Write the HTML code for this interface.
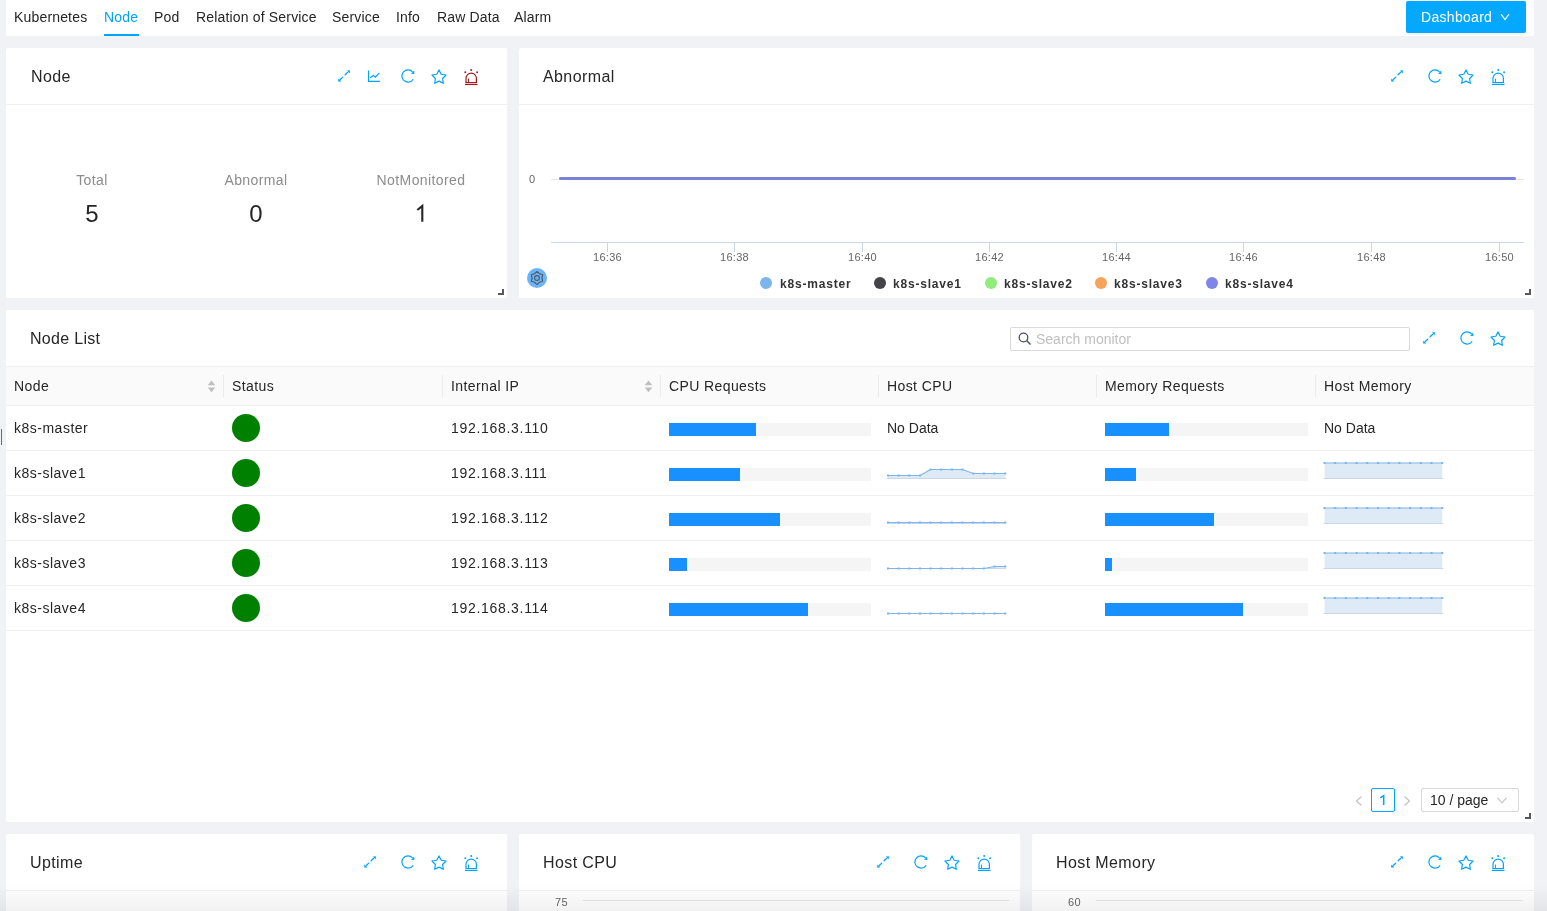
<!DOCTYPE html>
<html><head><meta charset="utf-8">
<style>
*{box-sizing:border-box;margin:0;padding:0}
html,body{width:1547px;height:911px;overflow:hidden}
body{background:#f0f2f5;font-family:"Liberation Sans",sans-serif;color:#262626;position:relative}
.a{position:absolute;white-space:nowrap}
.bg{position:absolute;background:#fff;border-radius:2px}
.pt{position:absolute;font-size:16px;line-height:20px;color:#262626;letter-spacing:0.4px}
.dv{position:absolute;height:1px;background:#f0f0f0}
.tab{position:absolute;top:9px;font-size:14px;line-height:16px;color:#262626;letter-spacing:0.17px}
.th{position:absolute;font-size:14px;line-height:16px;color:#262626;letter-spacing:0.4px}
.sep{position:absolute;top:375px;width:1px;height:22px;background:#ebebeb}
.rb{position:absolute;left:6px;width:1528px;height:1px;background:#f0f0f0}
.cell{position:absolute;font-size:14px;line-height:16px;color:#262626}
.bar{position:absolute;height:13px;background:#f5f5f5}
.bar i{position:absolute;left:0;top:0;bottom:0;background:#1890ff}
.dot{position:absolute;width:28px;height:28px;border-radius:50%;background:#008000}
.hdl{position:absolute;width:6px;height:6px;border-right:2px solid #595959;border-bottom:2px solid #595959}
.ax{position:absolute;font-size:11px;line-height:12px;color:#666;letter-spacing:0.3px}
.lg{position:absolute;font-size:12px;line-height:14px;font-weight:bold;color:#333}
.lc{position:absolute;width:12px;height:12px;border-radius:50%}
</style></head><body><div id="root" style="position:absolute;left:0;top:0;width:1547px;height:911px;will-change:transform">

<div class="bg" style="left:6px;top:0;width:1528px;height:36px;border-radius:0"></div>
<div class="tab" style="left:14px">Kubernetes</div>
<div class="tab" style="left:104px;color:#00a3ff">Node</div>
<div class="tab" style="left:154px">Pod</div>
<div class="tab" style="left:196px">Relation of Service</div>
<div class="tab" style="left:332px">Service</div>
<div class="tab" style="left:396px">Info</div>
<div class="tab" style="left:437px">Raw Data</div>
<div class="tab" style="left:514px">Alarm</div>
<div class="a" style="left:104px;top:34px;width:35px;height:2px;background:#00a3ff"></div>
<div class="a" style="left:1406px;top:1px;width:120px;height:32px;background:#05a8ff;border-radius:2px;box-shadow:0 2px 0 rgba(0,0,0,0.045)"></div>
<div class="a" style="left:1421px;top:9px;font-size:14px;line-height:16px;color:#fff;letter-spacing:0.3px">Dashboard</div>
<svg class="a" style="left:1500px;top:13px" width="10" height="8" viewBox="0 0 10 8"><path d="M1 1.2 L5 6.6 L9 1.2" fill="none" stroke="#fff" stroke-width="1.1"/></svg>
<div class="bg" style="left:6px;top:48px;width:501px;height:250px"></div>
<div class="dv" style="left:6px;top:104px;width:501px"></div>
<div class="pt" style="left:31px;top:67px">Node</div>
<svg class="a" style="left:336px;top:68px;overflow:visible" width="16" height="16" viewBox="0 0 16 16"><path d="M2.1 13.5 L2.4 10.6 L5.4 13.6Z M13.9 2.3 L11.0 2.5 L13.7 5.4Z" fill="#00a3ff"/><path d="M4.3 11.5 L6.8 9.1 M9.1 6.8 L11.7 4.3" stroke="#00a3ff" stroke-width="1.25" stroke-linecap="round" fill="none"/></svg><svg class="a" style="left:366px;top:68px;overflow:visible" width="16" height="16" viewBox="0 0 16 16"><path d="M2.5 2.4 V13.4 H13.9" stroke="#00a3ff" stroke-width="1.15" fill="none"/><path d="M4.5 9.5 L7.3 7.4 L9.4 9.2 L12.9 5.3" stroke="#00a3ff" stroke-width="1.2" stroke-linejoin="round" stroke-linecap="round" fill="none"/></svg><svg class="a" style="left:400.4px;top:68px;overflow:visible" width="16" height="16" viewBox="0 0 16 16"><path d="M12.53 3.92 A6.1 6.1 0 1 0 13.17 11.23" stroke="#00a3ff" stroke-width="1.2" fill="none"/><path d="M11.0 5.7 L14.4 6.0 L14.2 2.6Z" fill="#00a3ff"/></svg><svg class="a" style="left:430px;top:68px;overflow:visible" width="18" height="18" viewBox="0 0 18 18"><polygon points="9.00,1.90 11.23,6.23 16.04,7.01 12.61,10.47 13.35,15.29 9.00,13.10 4.65,15.29 5.39,10.47 1.96,7.01 6.77,6.23" stroke="#00a3ff" stroke-width="1.2" stroke-linejoin="round" fill="none"/></svg><svg class="a" style="left:464px;top:68px;overflow:visible" width="16" height="18" viewBox="0 0 16 18"><path d="M2.0 14.5 V10.3 A5.2 5.2 0 0 1 12.4 10.3 V14.5 Z" stroke="#a31a1e" stroke-width="1.2" fill="none"/><path d="M4.5 13.9 V10.6" stroke="#a31a1e" stroke-width="1.1" fill="none"/><path d="M0.9 16.4 H13.5" stroke="#a31a1e" stroke-width="1.3" fill="none"/><circle cx="7.2" cy="1.9" r="1" fill="#a31a1e"/><circle cx="1.3" cy="4.2" r="0.95" fill="#a31a1e"/><circle cx="13.1" cy="4.2" r="0.95" fill="#a31a1e"/></svg>
<div class="a" style="left:12px;top:172px;width:160px;text-align:center;font-size:14px;line-height:16px;color:#8c8c8c;letter-spacing:0.4px">Total</div>
<div class="a" style="left:12px;top:200px;width:160px;text-align:center;font-size:24px;line-height:28px;color:#262626">5</div>
<div class="a" style="left:176px;top:172px;width:160px;text-align:center;font-size:14px;line-height:16px;color:#8c8c8c;letter-spacing:0.4px">Abnormal</div>
<div class="a" style="left:176px;top:200px;width:160px;text-align:center;font-size:24px;line-height:28px;color:#262626">0</div>
<div class="a" style="left:341px;top:172px;width:160px;text-align:center;font-size:14px;line-height:16px;color:#8c8c8c;letter-spacing:0.4px">NotMonitored</div>
<svg class="a" style="left:410px;top:200px" width="20" height="26" viewBox="410 200 20 26"><path d="M417.3 210.0 L422.3 205.9 V221.8" fill="none" stroke="#262626" stroke-width="2.1" stroke-linejoin="miter"/></svg>
<div class="hdl" style="left:498px;top:289px"></div>
<div class="bg" style="left:519px;top:48px;width:1015px;height:250px"></div>
<div class="dv" style="left:519px;top:104px;width:1015px"></div>
<div class="pt" style="left:543px;top:67px">Abnormal</div>
<svg class="a" style="left:1389px;top:68px;overflow:visible" width="16" height="16" viewBox="0 0 16 16"><path d="M2.1 13.5 L2.4 10.6 L5.4 13.6Z M13.9 2.3 L11.0 2.5 L13.7 5.4Z" fill="#00a3ff"/><path d="M4.3 11.5 L6.8 9.1 M9.1 6.8 L11.7 4.3" stroke="#00a3ff" stroke-width="1.25" stroke-linecap="round" fill="none"/></svg><svg class="a" style="left:1427.4px;top:68px;overflow:visible" width="16" height="16" viewBox="0 0 16 16"><path d="M12.53 3.92 A6.1 6.1 0 1 0 13.17 11.23" stroke="#00a3ff" stroke-width="1.2" fill="none"/><path d="M11.0 5.7 L14.4 6.0 L14.2 2.6Z" fill="#00a3ff"/></svg><svg class="a" style="left:1457px;top:68px;overflow:visible" width="18" height="18" viewBox="0 0 18 18"><polygon points="9.00,1.90 11.23,6.23 16.04,7.01 12.61,10.47 13.35,15.29 9.00,13.10 4.65,15.29 5.39,10.47 1.96,7.01 6.77,6.23" stroke="#00a3ff" stroke-width="1.2" stroke-linejoin="round" fill="none"/></svg><svg class="a" style="left:1491px;top:68px;overflow:visible" width="16" height="18" viewBox="0 0 16 18"><path d="M2.0 14.5 V10.3 A5.2 5.2 0 0 1 12.4 10.3 V14.5 Z" stroke="#00a3ff" stroke-width="1.2" fill="none"/><path d="M4.5 13.9 V10.6" stroke="#00a3ff" stroke-width="1.1" fill="none"/><path d="M0.9 16.4 H13.5" stroke="#00a3ff" stroke-width="1.3" fill="none"/><circle cx="7.2" cy="1.9" r="1" fill="#00a3ff"/><circle cx="1.3" cy="4.2" r="0.95" fill="#00a3ff"/><circle cx="13.1" cy="4.2" r="0.95" fill="#00a3ff"/></svg>
<div class="ax" style="left:529px;top:173px">0</div>
<div class="a" style="left:551px;top:179px;width:973px;height:1px;background:#e6e6e6"></div>
<div class="a" style="left:559px;top:177px;width:957px;height:3px;border-radius:2px;background:#7b80d8"></div>
<div class="a" style="left:551px;top:242px;width:973px;height:1px;background:#ccd6eb"></div>
<div class="a" style="left:607px;top:242px;width:1px;height:10px;background:#ccd6eb"></div>
<div class="ax" style="left:577px;top:251px;width:61px;text-align:center">16:36</div>
<div class="a" style="left:734px;top:242px;width:1px;height:10px;background:#ccd6eb"></div>
<div class="ax" style="left:704px;top:251px;width:61px;text-align:center">16:38</div>
<div class="a" style="left:862px;top:242px;width:1px;height:10px;background:#ccd6eb"></div>
<div class="ax" style="left:832px;top:251px;width:61px;text-align:center">16:40</div>
<div class="a" style="left:989px;top:242px;width:1px;height:10px;background:#ccd6eb"></div>
<div class="ax" style="left:959px;top:251px;width:61px;text-align:center">16:42</div>
<div class="a" style="left:1116px;top:242px;width:1px;height:10px;background:#ccd6eb"></div>
<div class="ax" style="left:1086px;top:251px;width:61px;text-align:center">16:44</div>
<div class="a" style="left:1243px;top:242px;width:1px;height:10px;background:#ccd6eb"></div>
<div class="ax" style="left:1213px;top:251px;width:61px;text-align:center">16:46</div>
<div class="a" style="left:1371px;top:242px;width:1px;height:10px;background:#ccd6eb"></div>
<div class="ax" style="left:1341px;top:251px;width:61px;text-align:center">16:48</div>
<div class="a" style="left:1499px;top:242px;width:1px;height:10px;background:#ccd6eb"></div>
<div class="ax" style="left:1469px;top:251px;width:61px;text-align:center">16:50</div>
<div class="lc" style="left:760px;top:277px;background:#7cb5ec"></div>
<div class="lg" style="left:780px;top:277px;letter-spacing:0.8px">k8s-master</div>
<div class="lc" style="left:874px;top:277px;background:#434348"></div>
<div class="lg" style="left:893px;top:277px;letter-spacing:0.8px">k8s-slave1</div>
<div class="lc" style="left:985px;top:277px;background:#90ed7d"></div>
<div class="lg" style="left:1004px;top:277px;letter-spacing:0.8px">k8s-slave2</div>
<div class="lc" style="left:1095px;top:277px;background:#f7a35c"></div>
<div class="lg" style="left:1114px;top:277px;letter-spacing:0.8px">k8s-slave3</div>
<div class="lc" style="left:1206px;top:277px;background:#8085e9"></div>
<div class="lg" style="left:1225px;top:277px;letter-spacing:0.8px">k8s-slave4</div>
<div class="a" style="left:527px;top:268px;width:20px;height:20px;border-radius:50%;background:#6cb4f8"></div>
<svg class="a" style="left:530px;top:271px" width="14" height="14" viewBox="0 0 14 14"><polygon points="7.00,0.40 9.45,2.76 12.72,3.70 11.90,7.00 12.72,10.30 9.45,11.24 7.00,13.60 4.55,11.24 1.28,10.30 2.10,7.00 1.28,3.70 4.55,2.76" fill="none" stroke="#505a66" stroke-width="1.1" stroke-linejoin="round"/><circle cx="7" cy="7" r="2.4" fill="none" stroke="#505a66" stroke-width="1.1"/></svg>
<div class="hdl" style="left:1525px;top:289px"></div>
<div class="bg" style="left:6px;top:310px;width:1528px;height:512px"></div>
<div class="pt" style="left:30px;top:329px;letter-spacing:0.3px">Node List</div>
<div class="a" style="left:1010px;top:327px;width:400px;height:24px;border:1px solid #d9d9d9;border-radius:2px;background:#fff"></div>
<svg class="a" style="left:1018px;top:332px" width="14" height="14" viewBox="0 0 14 14"><circle cx="5.5" cy="5.5" r="4.3" fill="none" stroke="#4a5060" stroke-width="1.3"/><path d="M8.6 8.6 L12.5 12.5" stroke="#4a5060" stroke-width="1.4"/></svg>
<div class="a" style="left:1036px;top:331px;font-size:14px;line-height:16px;color:#bfbfbf">Search monitor</div>
<svg class="a" style="left:1421px;top:330px;overflow:visible" width="16" height="16" viewBox="0 0 16 16"><path d="M2.1 13.5 L2.4 10.6 L5.4 13.6Z M13.9 2.3 L11.0 2.5 L13.7 5.4Z" fill="#00a3ff"/><path d="M4.3 11.5 L6.8 9.1 M9.1 6.8 L11.7 4.3" stroke="#00a3ff" stroke-width="1.25" stroke-linecap="round" fill="none"/></svg>
<svg class="a" style="left:1459.4px;top:330px;overflow:visible" width="16" height="16" viewBox="0 0 16 16"><path d="M12.53 3.92 A6.1 6.1 0 1 0 13.17 11.23" stroke="#00a3ff" stroke-width="1.2" fill="none"/><path d="M11.0 5.7 L14.4 6.0 L14.2 2.6Z" fill="#00a3ff"/></svg>
<svg class="a" style="left:1489px;top:330px;overflow:visible" width="18" height="18" viewBox="0 0 18 18"><polygon points="9.00,1.90 11.23,6.23 16.04,7.01 12.61,10.47 13.35,15.29 9.00,13.10 4.65,15.29 5.39,10.47 1.96,7.01 6.77,6.23" stroke="#00a3ff" stroke-width="1.2" stroke-linejoin="round" fill="none"/></svg>
<div class="a" style="left:6px;top:366px;width:1528px;height:40px;background:#fafafa"></div>
<div class="rb" style="top:366px"></div>
<div class="rb" style="top:405px"></div>
<div class="th" style="left:14px;top:378px">Node</div>
<div class="th" style="left:232px;top:378px">Status</div>
<div class="th" style="left:451px;top:378px">Internal IP</div>
<div class="th" style="left:669px;top:378px">CPU Requests</div>
<div class="th" style="left:887px;top:378px">Host CPU</div>
<div class="th" style="left:1105px;top:378px">Memory Requests</div>
<div class="th" style="left:1324px;top:378px">Host Memory</div>
<div class="sep" style="left:223px"></div>
<div class="sep" style="left:442px"></div>
<div class="sep" style="left:660px"></div>
<div class="sep" style="left:878px"></div>
<div class="sep" style="left:1096px"></div>
<div class="sep" style="left:1315px"></div>
<svg class="a" style="left:206.5px;top:379.5px" width="9" height="13" viewBox="0 0 9 13"><path d="M4.5 0.4 L8.3 5.3 H0.7z M4.5 12.3 L8.3 7.6 H0.7z" fill="#bfbfbf"/></svg>
<svg class="a" style="left:643.5px;top:379.5px" width="9" height="13" viewBox="0 0 9 13"><path d="M4.5 0.4 L8.3 5.3 H0.7z M4.5 12.3 L8.3 7.6 H0.7z" fill="#bfbfbf"/></svg>
<div class="rb" style="top:450px"></div>
<div class="cell" style="left:14px;top:420px;letter-spacing:0.5px">k8s-master</div>
<div class="dot" style="left:232px;top:414px"></div>
<div class="cell" style="left:451px;top:420px;letter-spacing:0.7px">192.168.3.110</div>
<div class="bar" style="left:669px;top:423px;width:202px"><i style="width:87px"></i></div>
<div class="bar" style="left:1105px;top:423px;width:203px"><i style="width:64px"></i></div>
<div class="cell" style="left:887px;top:420px">No Data</div>
<div class="cell" style="left:1324px;top:420px">No Data</div>
<div class="rb" style="top:495px"></div>
<div class="cell" style="left:14px;top:465px;letter-spacing:0.5px">k8s-slave1</div>
<div class="dot" style="left:232px;top:459px"></div>
<div class="cell" style="left:451px;top:465px;letter-spacing:0.7px">192.168.3.111</div>
<div class="bar" style="left:669px;top:468px;width:202px"><i style="width:71px"></i></div>
<div class="bar" style="left:1105px;top:468px;width:203px"><i style="width:31px"></i></div>
<svg class="a" style="left:884px;top:456px" width="126" height="30" viewBox="0 0 126 30"><path d="M4.0 19.5 L14.7 19.5 L25.3 19.5 L36.0 19.5 L46.6 13.5 L57.2 13.5 L67.9 13.5 L78.5 13.5 L89.2 17.5 L99.9 17.5 L110.5 17.5 L121.2 17.5 L121.2 22.5 L4.0 22.5 Z" fill="#deebf7"/><path d="M3 22.5 H122.15" stroke="#ccd6eb" stroke-width="1" fill="none"/><path d="M4.0 19.5 L14.7 19.5 L25.3 19.5 L36.0 19.5 L46.6 13.5 L57.2 13.5 L67.9 13.5 L78.5 13.5 L89.2 17.5 L99.9 17.5 L110.5 17.5 L121.2 17.5" fill="none" stroke="#7cb5ec" stroke-width="1.1"/><rect x="3.0" y="18.5" width="2" height="2" fill="#7cb5ec"/><rect x="13.7" y="18.5" width="2" height="2" fill="#7cb5ec"/><rect x="24.3" y="18.5" width="2" height="2" fill="#7cb5ec"/><rect x="35.0" y="18.5" width="2" height="2" fill="#7cb5ec"/><rect x="45.6" y="12.5" width="2" height="2" fill="#7cb5ec"/><rect x="56.2" y="12.5" width="2" height="2" fill="#7cb5ec"/><rect x="66.9" y="12.5" width="2" height="2" fill="#7cb5ec"/><rect x="77.5" y="12.5" width="2" height="2" fill="#7cb5ec"/><rect x="88.2" y="16.5" width="2" height="2" fill="#7cb5ec"/><rect x="98.9" y="16.5" width="2" height="2" fill="#7cb5ec"/><rect x="109.5" y="16.5" width="2" height="2" fill="#7cb5ec"/><rect x="120.2" y="16.5" width="2" height="2" fill="#7cb5ec"/></svg><svg class="a" style="left:1320px;top:456px" width="128" height="30" viewBox="0 0 128 30"><path d="M4.5 7.0 L15.2 7.0 L25.9 7.0 L36.6 7.0 L47.3 7.0 L58.0 7.0 L68.7 7.0 L79.4 7.0 L90.1 7.0 L100.8 7.0 L111.5 7.0 L122.2 7.0 L122.2 22.5 L4.5 22.5 Z" fill="#deebf7"/><path d="M3.5 22.5 H123.19999999999999" stroke="#ccd6eb" stroke-width="1" fill="none"/><path d="M4.5 7.0 L15.2 7.0 L25.9 7.0 L36.6 7.0 L47.3 7.0 L58.0 7.0 L68.7 7.0 L79.4 7.0 L90.1 7.0 L100.8 7.0 L111.5 7.0 L122.2 7.0" fill="none" stroke="#7cb5ec" stroke-width="1.1"/><rect x="3.5" y="6.0" width="2" height="2" fill="#7cb5ec"/><rect x="14.2" y="6.0" width="2" height="2" fill="#7cb5ec"/><rect x="24.9" y="6.0" width="2" height="2" fill="#7cb5ec"/><rect x="35.6" y="6.0" width="2" height="2" fill="#7cb5ec"/><rect x="46.3" y="6.0" width="2" height="2" fill="#7cb5ec"/><rect x="57.0" y="6.0" width="2" height="2" fill="#7cb5ec"/><rect x="67.7" y="6.0" width="2" height="2" fill="#7cb5ec"/><rect x="78.4" y="6.0" width="2" height="2" fill="#7cb5ec"/><rect x="89.1" y="6.0" width="2" height="2" fill="#7cb5ec"/><rect x="99.8" y="6.0" width="2" height="2" fill="#7cb5ec"/><rect x="110.5" y="6.0" width="2" height="2" fill="#7cb5ec"/><rect x="121.2" y="6.0" width="2" height="2" fill="#7cb5ec"/></svg>
<div class="rb" style="top:540px"></div>
<div class="cell" style="left:14px;top:510px;letter-spacing:0.5px">k8s-slave2</div>
<div class="dot" style="left:232px;top:504px"></div>
<div class="cell" style="left:451px;top:510px;letter-spacing:0.7px">192.168.3.112</div>
<div class="bar" style="left:669px;top:513px;width:202px"><i style="width:111px"></i></div>
<div class="bar" style="left:1105px;top:513px;width:203px"><i style="width:109px"></i></div>
<svg class="a" style="left:884px;top:501px" width="126" height="30" viewBox="0 0 126 30"><path d="M4.0 21.5 L14.7 21.5 L25.3 21.5 L36.0 21.5 L46.6 21.5 L57.2 21.5 L67.9 21.5 L78.5 21.5 L89.2 21.5 L99.9 21.5 L110.5 21.5 L121.2 21.5 L121.2 22.5 L4.0 22.5 Z" fill="#deebf7"/><path d="M3 22.5 H122.15" stroke="#ccd6eb" stroke-width="1" fill="none"/><path d="M4.0 21.5 L14.7 21.5 L25.3 21.5 L36.0 21.5 L46.6 21.5 L57.2 21.5 L67.9 21.5 L78.5 21.5 L89.2 21.5 L99.9 21.5 L110.5 21.5 L121.2 21.5" fill="none" stroke="#7cb5ec" stroke-width="1.1"/><rect x="3.0" y="20.5" width="2" height="2" fill="#7cb5ec"/><rect x="13.7" y="20.5" width="2" height="2" fill="#7cb5ec"/><rect x="24.3" y="20.5" width="2" height="2" fill="#7cb5ec"/><rect x="35.0" y="20.5" width="2" height="2" fill="#7cb5ec"/><rect x="45.6" y="20.5" width="2" height="2" fill="#7cb5ec"/><rect x="56.2" y="20.5" width="2" height="2" fill="#7cb5ec"/><rect x="66.9" y="20.5" width="2" height="2" fill="#7cb5ec"/><rect x="77.5" y="20.5" width="2" height="2" fill="#7cb5ec"/><rect x="88.2" y="20.5" width="2" height="2" fill="#7cb5ec"/><rect x="98.9" y="20.5" width="2" height="2" fill="#7cb5ec"/><rect x="109.5" y="20.5" width="2" height="2" fill="#7cb5ec"/><rect x="120.2" y="20.5" width="2" height="2" fill="#7cb5ec"/></svg><svg class="a" style="left:1320px;top:501px" width="128" height="30" viewBox="0 0 128 30"><path d="M4.5 7.0 L15.2 7.0 L25.9 7.0 L36.6 7.0 L47.3 7.0 L58.0 7.0 L68.7 7.0 L79.4 7.0 L90.1 7.0 L100.8 7.0 L111.5 7.0 L122.2 7.0 L122.2 22.5 L4.5 22.5 Z" fill="#deebf7"/><path d="M3.5 22.5 H123.19999999999999" stroke="#ccd6eb" stroke-width="1" fill="none"/><path d="M4.5 7.0 L15.2 7.0 L25.9 7.0 L36.6 7.0 L47.3 7.0 L58.0 7.0 L68.7 7.0 L79.4 7.0 L90.1 7.0 L100.8 7.0 L111.5 7.0 L122.2 7.0" fill="none" stroke="#7cb5ec" stroke-width="1.1"/><rect x="3.5" y="6.0" width="2" height="2" fill="#7cb5ec"/><rect x="14.2" y="6.0" width="2" height="2" fill="#7cb5ec"/><rect x="24.9" y="6.0" width="2" height="2" fill="#7cb5ec"/><rect x="35.6" y="6.0" width="2" height="2" fill="#7cb5ec"/><rect x="46.3" y="6.0" width="2" height="2" fill="#7cb5ec"/><rect x="57.0" y="6.0" width="2" height="2" fill="#7cb5ec"/><rect x="67.7" y="6.0" width="2" height="2" fill="#7cb5ec"/><rect x="78.4" y="6.0" width="2" height="2" fill="#7cb5ec"/><rect x="89.1" y="6.0" width="2" height="2" fill="#7cb5ec"/><rect x="99.8" y="6.0" width="2" height="2" fill="#7cb5ec"/><rect x="110.5" y="6.0" width="2" height="2" fill="#7cb5ec"/><rect x="121.2" y="6.0" width="2" height="2" fill="#7cb5ec"/></svg>
<div class="rb" style="top:585px"></div>
<div class="cell" style="left:14px;top:555px;letter-spacing:0.5px">k8s-slave3</div>
<div class="dot" style="left:232px;top:549px"></div>
<div class="cell" style="left:451px;top:555px;letter-spacing:0.7px">192.168.3.113</div>
<div class="bar" style="left:669px;top:558px;width:202px"><i style="width:18px"></i></div>
<div class="bar" style="left:1105px;top:558px;width:203px"><i style="width:7px"></i></div>
<svg class="a" style="left:884px;top:546px" width="126" height="30" viewBox="0 0 126 30"><path d="M4.0 22.5 L14.7 22.5 L25.3 22.5 L36.0 22.5 L46.6 22.5 L57.2 22.5 L67.9 22.5 L78.5 22.5 L89.2 22.5 L99.9 22.5 L110.5 20.5 L121.2 20.5 L121.2 22.5 L4.0 22.5 Z" fill="#deebf7"/><path d="M3 22.5 H122.15" stroke="#ccd6eb" stroke-width="1" fill="none"/><path d="M4.0 22.5 L14.7 22.5 L25.3 22.5 L36.0 22.5 L46.6 22.5 L57.2 22.5 L67.9 22.5 L78.5 22.5 L89.2 22.5 L99.9 22.5 L110.5 20.5 L121.2 20.5" fill="none" stroke="#7cb5ec" stroke-width="1.1"/><rect x="3.0" y="21.5" width="2" height="2" fill="#7cb5ec"/><rect x="13.7" y="21.5" width="2" height="2" fill="#7cb5ec"/><rect x="24.3" y="21.5" width="2" height="2" fill="#7cb5ec"/><rect x="35.0" y="21.5" width="2" height="2" fill="#7cb5ec"/><rect x="45.6" y="21.5" width="2" height="2" fill="#7cb5ec"/><rect x="56.2" y="21.5" width="2" height="2" fill="#7cb5ec"/><rect x="66.9" y="21.5" width="2" height="2" fill="#7cb5ec"/><rect x="77.5" y="21.5" width="2" height="2" fill="#7cb5ec"/><rect x="88.2" y="21.5" width="2" height="2" fill="#7cb5ec"/><rect x="98.9" y="21.5" width="2" height="2" fill="#7cb5ec"/><rect x="109.5" y="19.5" width="2" height="2" fill="#7cb5ec"/><rect x="120.2" y="19.5" width="2" height="2" fill="#7cb5ec"/></svg><svg class="a" style="left:1320px;top:546px" width="128" height="30" viewBox="0 0 128 30"><path d="M4.5 7.0 L15.2 7.0 L25.9 7.0 L36.6 7.0 L47.3 7.0 L58.0 7.0 L68.7 7.0 L79.4 7.0 L90.1 7.0 L100.8 7.0 L111.5 7.0 L122.2 7.0 L122.2 22.5 L4.5 22.5 Z" fill="#deebf7"/><path d="M3.5 22.5 H123.19999999999999" stroke="#ccd6eb" stroke-width="1" fill="none"/><path d="M4.5 7.0 L15.2 7.0 L25.9 7.0 L36.6 7.0 L47.3 7.0 L58.0 7.0 L68.7 7.0 L79.4 7.0 L90.1 7.0 L100.8 7.0 L111.5 7.0 L122.2 7.0" fill="none" stroke="#7cb5ec" stroke-width="1.1"/><rect x="3.5" y="6.0" width="2" height="2" fill="#7cb5ec"/><rect x="14.2" y="6.0" width="2" height="2" fill="#7cb5ec"/><rect x="24.9" y="6.0" width="2" height="2" fill="#7cb5ec"/><rect x="35.6" y="6.0" width="2" height="2" fill="#7cb5ec"/><rect x="46.3" y="6.0" width="2" height="2" fill="#7cb5ec"/><rect x="57.0" y="6.0" width="2" height="2" fill="#7cb5ec"/><rect x="67.7" y="6.0" width="2" height="2" fill="#7cb5ec"/><rect x="78.4" y="6.0" width="2" height="2" fill="#7cb5ec"/><rect x="89.1" y="6.0" width="2" height="2" fill="#7cb5ec"/><rect x="99.8" y="6.0" width="2" height="2" fill="#7cb5ec"/><rect x="110.5" y="6.0" width="2" height="2" fill="#7cb5ec"/><rect x="121.2" y="6.0" width="2" height="2" fill="#7cb5ec"/></svg>
<div class="rb" style="top:630px"></div>
<div class="cell" style="left:14px;top:600px;letter-spacing:0.5px">k8s-slave4</div>
<div class="dot" style="left:232px;top:594px"></div>
<div class="cell" style="left:451px;top:600px;letter-spacing:0.7px">192.168.3.114</div>
<div class="bar" style="left:669px;top:603px;width:202px"><i style="width:139px"></i></div>
<div class="bar" style="left:1105px;top:603px;width:203px"><i style="width:138px"></i></div>
<svg class="a" style="left:884px;top:591px" width="126" height="30" viewBox="0 0 126 30"><path d="M4.0 22.5 L14.7 22.5 L25.3 22.5 L36.0 22.5 L46.6 22.5 L57.2 22.5 L67.9 22.5 L78.5 22.5 L89.2 22.5 L99.9 22.5 L110.5 22.5 L121.2 22.5 L121.2 22.5 L4.0 22.5 Z" fill="#deebf7"/><path d="M3 22.5 H122.15" stroke="#ccd6eb" stroke-width="1" fill="none"/><path d="M4.0 22.5 L14.7 22.5 L25.3 22.5 L36.0 22.5 L46.6 22.5 L57.2 22.5 L67.9 22.5 L78.5 22.5 L89.2 22.5 L99.9 22.5 L110.5 22.5 L121.2 22.5" fill="none" stroke="#7cb5ec" stroke-width="1.1"/><rect x="3.0" y="21.5" width="2" height="2" fill="#7cb5ec"/><rect x="13.7" y="21.5" width="2" height="2" fill="#7cb5ec"/><rect x="24.3" y="21.5" width="2" height="2" fill="#7cb5ec"/><rect x="35.0" y="21.5" width="2" height="2" fill="#7cb5ec"/><rect x="45.6" y="21.5" width="2" height="2" fill="#7cb5ec"/><rect x="56.2" y="21.5" width="2" height="2" fill="#7cb5ec"/><rect x="66.9" y="21.5" width="2" height="2" fill="#7cb5ec"/><rect x="77.5" y="21.5" width="2" height="2" fill="#7cb5ec"/><rect x="88.2" y="21.5" width="2" height="2" fill="#7cb5ec"/><rect x="98.9" y="21.5" width="2" height="2" fill="#7cb5ec"/><rect x="109.5" y="21.5" width="2" height="2" fill="#7cb5ec"/><rect x="120.2" y="21.5" width="2" height="2" fill="#7cb5ec"/></svg><svg class="a" style="left:1320px;top:591px" width="128" height="30" viewBox="0 0 128 30"><path d="M4.5 7.0 L15.2 7.0 L25.9 7.0 L36.6 7.0 L47.3 7.0 L58.0 7.0 L68.7 7.0 L79.4 7.0 L90.1 7.0 L100.8 7.0 L111.5 7.0 L122.2 7.0 L122.2 22.5 L4.5 22.5 Z" fill="#deebf7"/><path d="M3.5 22.5 H123.19999999999999" stroke="#ccd6eb" stroke-width="1" fill="none"/><path d="M4.5 7.0 L15.2 7.0 L25.9 7.0 L36.6 7.0 L47.3 7.0 L58.0 7.0 L68.7 7.0 L79.4 7.0 L90.1 7.0 L100.8 7.0 L111.5 7.0 L122.2 7.0" fill="none" stroke="#7cb5ec" stroke-width="1.1"/><rect x="3.5" y="6.0" width="2" height="2" fill="#7cb5ec"/><rect x="14.2" y="6.0" width="2" height="2" fill="#7cb5ec"/><rect x="24.9" y="6.0" width="2" height="2" fill="#7cb5ec"/><rect x="35.6" y="6.0" width="2" height="2" fill="#7cb5ec"/><rect x="46.3" y="6.0" width="2" height="2" fill="#7cb5ec"/><rect x="57.0" y="6.0" width="2" height="2" fill="#7cb5ec"/><rect x="67.7" y="6.0" width="2" height="2" fill="#7cb5ec"/><rect x="78.4" y="6.0" width="2" height="2" fill="#7cb5ec"/><rect x="89.1" y="6.0" width="2" height="2" fill="#7cb5ec"/><rect x="99.8" y="6.0" width="2" height="2" fill="#7cb5ec"/><rect x="110.5" y="6.0" width="2" height="2" fill="#7cb5ec"/><rect x="121.2" y="6.0" width="2" height="2" fill="#7cb5ec"/></svg>
<svg class="a" style="left:1355px;top:796px" width="8" height="10" viewBox="0 0 8 10"><path d="M6.5 0.5 L1.5 5 L6.5 9.5" fill="none" stroke="#bfbfbf" stroke-width="1.1"/></svg>
<div class="a" style="left:1371px;top:788px;width:24px;height:24px;border:1px solid #00a3ff;border-radius:2px"></div>
<svg class="a" style="left:1375px;top:792px" width="14" height="16" viewBox="1375 792 14 16"><path d="M1380.3 797.9 L1383.7 795.6 V804.9" fill="none" stroke="#00a3ff" stroke-width="1.5"/></svg>
<svg class="a" style="left:1403px;top:796px" width="8" height="10" viewBox="0 0 8 10"><path d="M1.5 0.5 L6.5 5 L1.5 9.5" fill="none" stroke="#bfbfbf" stroke-width="1.1"/></svg>
<div class="a" style="left:1421px;top:788px;width:98px;height:24px;border:1px solid #d9d9d9;border-radius:2px;background:#fff"></div>
<div class="a" style="left:1430px;top:792px;font-size:14px;line-height:16px;color:#262626">10 / page</div>
<svg class="a" style="left:1497px;top:797px" width="10" height="7" viewBox="0 0 10 7"><path d="M0.5 0.8 L5 5.8 L9.5 0.8" fill="none" stroke="#bfbfbf" stroke-width="1.1"/></svg>
<div class="hdl" style="left:1525px;top:813px"></div>
<div class="bg" style="left:6px;top:834px;width:501px;height:100px"></div>
<div class="dv" style="left:6px;top:890px;width:501px"></div>
<div class="pt" style="left:30px;top:853px">Uptime</div>
<svg class="a" style="left:362px;top:854px;overflow:visible" width="16" height="16" viewBox="0 0 16 16"><path d="M2.1 13.5 L2.4 10.6 L5.4 13.6Z M13.9 2.3 L11.0 2.5 L13.7 5.4Z" fill="#00a3ff"/><path d="M4.3 11.5 L6.8 9.1 M9.1 6.8 L11.7 4.3" stroke="#00a3ff" stroke-width="1.25" stroke-linecap="round" fill="none"/></svg><svg class="a" style="left:400.4px;top:854px;overflow:visible" width="16" height="16" viewBox="0 0 16 16"><path d="M12.53 3.92 A6.1 6.1 0 1 0 13.17 11.23" stroke="#00a3ff" stroke-width="1.2" fill="none"/><path d="M11.0 5.7 L14.4 6.0 L14.2 2.6Z" fill="#00a3ff"/></svg><svg class="a" style="left:430px;top:854px;overflow:visible" width="18" height="18" viewBox="0 0 18 18"><polygon points="9.00,1.90 11.23,6.23 16.04,7.01 12.61,10.47 13.35,15.29 9.00,13.10 4.65,15.29 5.39,10.47 1.96,7.01 6.77,6.23" stroke="#00a3ff" stroke-width="1.2" stroke-linejoin="round" fill="none"/></svg><svg class="a" style="left:464px;top:854px;overflow:visible" width="16" height="18" viewBox="0 0 16 18"><path d="M2.0 14.5 V10.3 A5.2 5.2 0 0 1 12.4 10.3 V14.5 Z" stroke="#00a3ff" stroke-width="1.2" fill="none"/><path d="M4.5 13.9 V10.6" stroke="#00a3ff" stroke-width="1.1" fill="none"/><path d="M0.9 16.4 H13.5" stroke="#00a3ff" stroke-width="1.3" fill="none"/><circle cx="7.2" cy="1.9" r="1" fill="#00a3ff"/><circle cx="1.3" cy="4.2" r="0.95" fill="#00a3ff"/><circle cx="13.1" cy="4.2" r="0.95" fill="#00a3ff"/></svg>
<div class="bg" style="left:519px;top:834px;width:501px;height:100px"></div>
<div class="dv" style="left:519px;top:890px;width:501px"></div>
<div class="pt" style="left:543px;top:853px">Host CPU</div>
<svg class="a" style="left:875px;top:854px;overflow:visible" width="16" height="16" viewBox="0 0 16 16"><path d="M2.1 13.5 L2.4 10.6 L5.4 13.6Z M13.9 2.3 L11.0 2.5 L13.7 5.4Z" fill="#00a3ff"/><path d="M4.3 11.5 L6.8 9.1 M9.1 6.8 L11.7 4.3" stroke="#00a3ff" stroke-width="1.25" stroke-linecap="round" fill="none"/></svg><svg class="a" style="left:913.4px;top:854px;overflow:visible" width="16" height="16" viewBox="0 0 16 16"><path d="M12.53 3.92 A6.1 6.1 0 1 0 13.17 11.23" stroke="#00a3ff" stroke-width="1.2" fill="none"/><path d="M11.0 5.7 L14.4 6.0 L14.2 2.6Z" fill="#00a3ff"/></svg><svg class="a" style="left:943px;top:854px;overflow:visible" width="18" height="18" viewBox="0 0 18 18"><polygon points="9.00,1.90 11.23,6.23 16.04,7.01 12.61,10.47 13.35,15.29 9.00,13.10 4.65,15.29 5.39,10.47 1.96,7.01 6.77,6.23" stroke="#00a3ff" stroke-width="1.2" stroke-linejoin="round" fill="none"/></svg><svg class="a" style="left:977px;top:854px;overflow:visible" width="16" height="18" viewBox="0 0 16 18"><path d="M2.0 14.5 V10.3 A5.2 5.2 0 0 1 12.4 10.3 V14.5 Z" stroke="#00a3ff" stroke-width="1.2" fill="none"/><path d="M4.5 13.9 V10.6" stroke="#00a3ff" stroke-width="1.1" fill="none"/><path d="M0.9 16.4 H13.5" stroke="#00a3ff" stroke-width="1.3" fill="none"/><circle cx="7.2" cy="1.9" r="1" fill="#00a3ff"/><circle cx="1.3" cy="4.2" r="0.95" fill="#00a3ff"/><circle cx="13.1" cy="4.2" r="0.95" fill="#00a3ff"/></svg>
<div class="ax" style="left:555px;top:896px">75</div>
<div class="a" style="left:583px;top:900px;width:426px;height:1px;background:#e6e6e6"></div>
<div class="bg" style="left:1032px;top:834px;width:502px;height:100px"></div>
<div class="dv" style="left:1032px;top:890px;width:502px"></div>
<div class="pt" style="left:1056px;top:853px">Host Memory</div>
<svg class="a" style="left:1389px;top:854px;overflow:visible" width="16" height="16" viewBox="0 0 16 16"><path d="M2.1 13.5 L2.4 10.6 L5.4 13.6Z M13.9 2.3 L11.0 2.5 L13.7 5.4Z" fill="#00a3ff"/><path d="M4.3 11.5 L6.8 9.1 M9.1 6.8 L11.7 4.3" stroke="#00a3ff" stroke-width="1.25" stroke-linecap="round" fill="none"/></svg><svg class="a" style="left:1427.4px;top:854px;overflow:visible" width="16" height="16" viewBox="0 0 16 16"><path d="M12.53 3.92 A6.1 6.1 0 1 0 13.17 11.23" stroke="#00a3ff" stroke-width="1.2" fill="none"/><path d="M11.0 5.7 L14.4 6.0 L14.2 2.6Z" fill="#00a3ff"/></svg><svg class="a" style="left:1457px;top:854px;overflow:visible" width="18" height="18" viewBox="0 0 18 18"><polygon points="9.00,1.90 11.23,6.23 16.04,7.01 12.61,10.47 13.35,15.29 9.00,13.10 4.65,15.29 5.39,10.47 1.96,7.01 6.77,6.23" stroke="#00a3ff" stroke-width="1.2" stroke-linejoin="round" fill="none"/></svg><svg class="a" style="left:1491px;top:854px;overflow:visible" width="16" height="18" viewBox="0 0 16 18"><path d="M2.0 14.5 V10.3 A5.2 5.2 0 0 1 12.4 10.3 V14.5 Z" stroke="#00a3ff" stroke-width="1.2" fill="none"/><path d="M4.5 13.9 V10.6" stroke="#00a3ff" stroke-width="1.1" fill="none"/><path d="M0.9 16.4 H13.5" stroke="#00a3ff" stroke-width="1.3" fill="none"/><circle cx="7.2" cy="1.9" r="1" fill="#00a3ff"/><circle cx="1.3" cy="4.2" r="0.95" fill="#00a3ff"/><circle cx="13.1" cy="4.2" r="0.95" fill="#00a3ff"/></svg>
<div class="ax" style="left:1068px;top:896px">60</div>
<div class="a" style="left:1096px;top:900px;width:427px;height:1px;background:#e6e6e6"></div>
<div class="a" style="left:1px;top:429px;width:1px;height:16px;background:#6b6b6b"></div>
<div class="a" style="left:0;top:885px;width:1547px;height:26px;background:linear-gradient(rgba(0,0,0,0),rgba(0,0,0,0.055))"></div>
</div></body></html>
